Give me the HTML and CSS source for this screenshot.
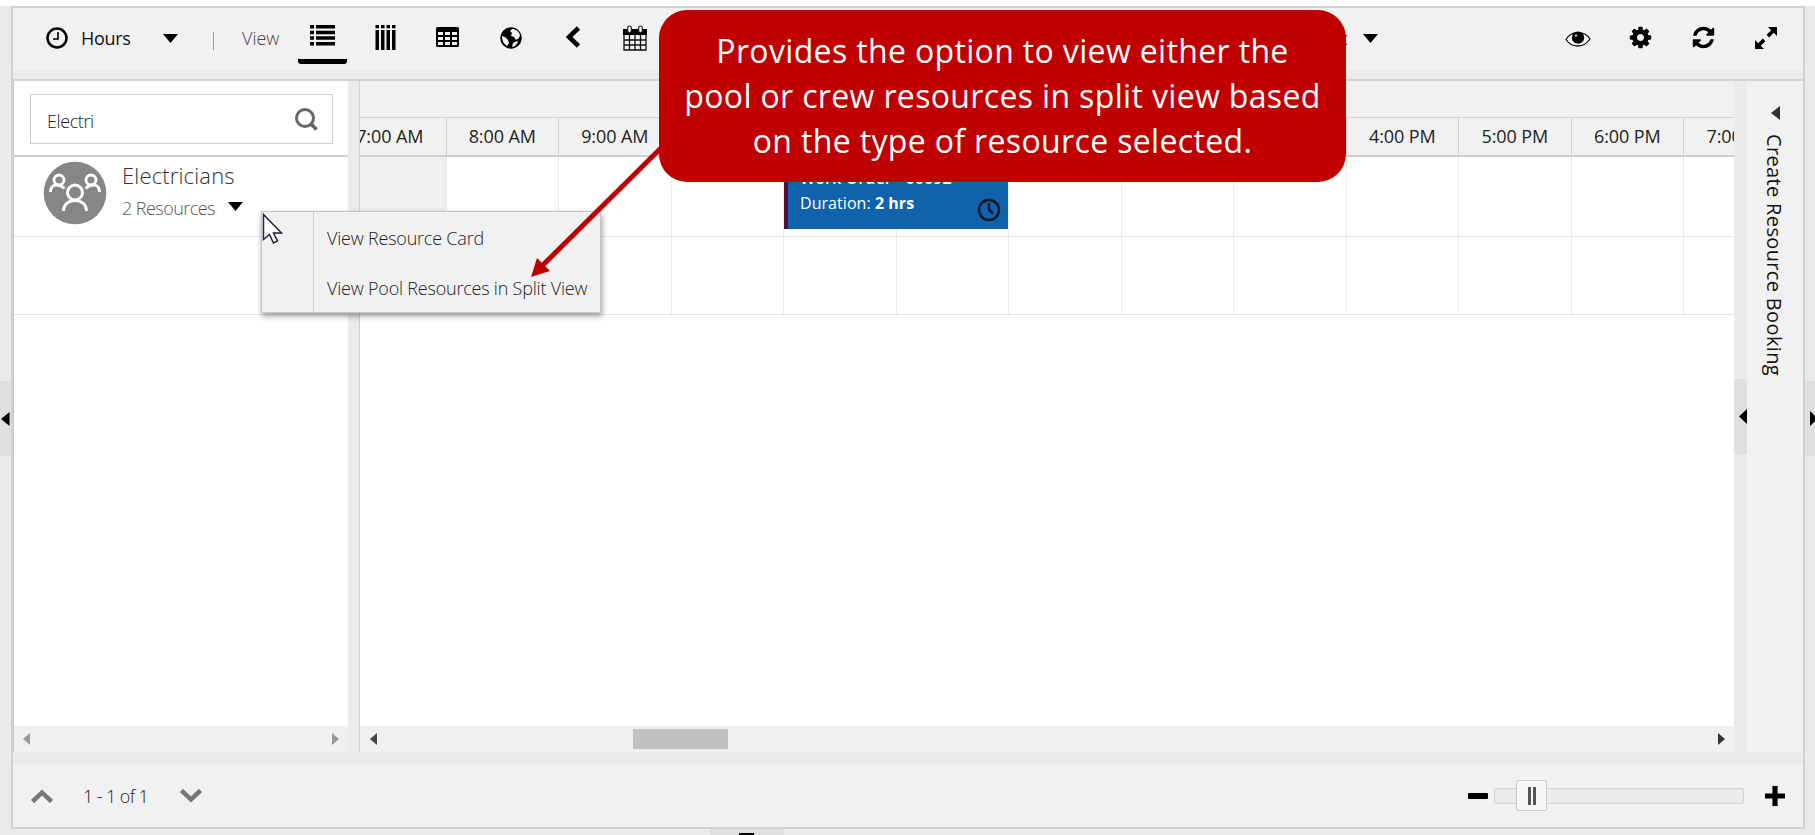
FILE: index.html
```html
<!DOCTYPE html>
<html lang="en">
<head>
<meta charset="utf-8">
<title>Schedule Board</title>
<link rel="stylesheet" href="styles.css">
</head>
<body>
<div class="page">
  <div class="rail rail-left"><div class="handle"><svg width="11" height="16" viewBox="0 0 11 16"><path d="M1 8 9.500 1v14z"/></svg></div></div>
  <main class="frame">
    <header class="toolbar">
      <svg class="i-clock" width="22" height="22" viewBox="0 0 22 22"><circle cx="11" cy="11" r="9.500" fill="none" stroke="#000" stroke-width="2.500"/><path d="M12 5v7H7" fill="none" stroke="#000" stroke-width="1.600"/></svg>
      <span class="t-hours">Hours</span>
      <svg class="i-caret1" width="15" height="9" viewBox="0 0 15 9"><path d="M0 0h15L7.500 9z"/></svg>
      <span class="bar"></span>
      <span class="t-view">View</span>
      <span class="tab"><svg width="25" height="21" viewBox="0 0 25 21"><path d="M0 0h4v3.500H0zM6 0h19v3.500H6zM0 5.700h4v3.500H0zM6 5.700h19v3.500H6zM0 11.300h4v3.500H0zM6 11.300h19v3.500H6zM0 17h4v3.500H0zM6 17h19v3.500H6z"/></svg></span>
      <svg class="i-cols" width="21" height="25" viewBox="0 0 21 25"><path d="M.5 0H4v3.300H.5zM6 0h3.500v3.300H6zM11.500 0H15v3.300h-3.500zM17 0h3.500v3.300H17zM.5 5H4v20H.5zM6 5h3.500v20H6zM11.500 5H15v20h-3.500zM17 5h3.500v20H17z"/></svg>
      <svg class="i-table" width="23" height="20" viewBox="0 0 23 20"><path fill-rule="evenodd" d="M1.500 0h20Q23 0 23 1.500v17q0 1.500-1.500 1.500h-20Q0 20 0 18.500v-17Q0 0 1.500 0zM2 5v3h5V5zM9 5v3h5V5zM16 5v3h5V5zM2 10v3h5v-3zM9 10v3h5v-3zM16 10v3h5v-3zM2 15v3h5v-3zM9 15v3h5v-3zM16 15v3h5v-3z"/></svg>
      <svg class="i-globe" width="22" height="22" viewBox="0 0 22 22"><circle cx="11" cy="11" r="10.700"/><path fill="#f1f1f1" d="M12 2c4 0 7 2.500 8 6l-1 3-3 2-2-3-3-1 1-3-2-2zM2 9l3 1 3 3 1 3-2 3C4 17 2 14 2 9zM13 16l4-2 1 1-3 4-3 1z"/></svg>
      <svg class="i-chev" width="15" height="22" viewBox="0 0 15 22"><path d="M12.500 2 3 11l9.500 9" fill="none" stroke="#000" stroke-width="4.600"/></svg>
      <svg class="i-cal" width="24" height="26" viewBox="0 0 24 26"><path d="M0 4h24v6H0z"/><path d="M1 9v16h22V9M6.500 10v15M12 10v15M17.500 10v15M1 15h22M1 20h22" fill="none" stroke="#111" stroke-width="1.300"/><rect x="4.700" y="1" width="3.600" height="6.500" rx="1.800" fill="#fff" stroke="#222" stroke-width="1.200"/><rect x="15.700" y="1" width="3.600" height="6.500" rx="1.800" fill="#fff" stroke="#222" stroke-width="1.200"/></svg>
      <span class="t-t">t</span>
      <svg class="i-caret2" width="15" height="9" viewBox="0 0 15 9"><path d="M0 0h15L7.500 9z"/></svg>
      <svg class="i-eye" width="26" height="18" viewBox="0 0 26 18"><path d="M1 9.500C6 1 19 0 25 9 19 18 7 18.500 1 9.500z" fill="#f7f7f7" stroke="#111" stroke-width="1.300"/><circle cx="13" cy="7.600" r="6.200"/><circle cx="11" cy="5.500" r="1.300" fill="#aaa"/></svg>
      <svg class="i-cog" width="25" height="25" viewBox="0 0 1792 1792"><path d="M1152 896q0-106-75-181t-181-75-181 75-75 181 75 181 181 75 181-75 75-181zm512-109v222q0 12-8 23t-20 13l-185 28q-19 54-39 91 35 50 107 138 10 12 10 25t-9 23q-27 37-99 108t-94 71q-12 0-26-9l-138-108q-44 23-91 38-16 136-29 186-7 28-36 28h-222q-14 0-24.500-8.500t-11.500-21.500l-28-184q-49-16-90-37l-141 107q-10 9-25 9-14 0-25-11-126-114-165-168-7-10-7-23 0-12 8-23 15-21 51-66.500t54-70.500q-27-50-41-99l-183-27q-13-2-21-12.500t-8-23.500v-222q0-12 8-23t19-13l186-28q14-46 39-92-40-57-107-138-10-12-10-24 0-10 9-23 26-36 98.500-107.500t94.500-71.500q13 0 26 10l138 107q44-23 91-38 16-136 29-186 7-28 36-28h222q14 0 24.500 8.500t11.500 21.500l28 184q49 16 90 37l142-107q9-9 24-9 13 0 25 10 129 119 165 170 7 8 7 22 0 12-8 23-15 21-51 66.500t-54 70.500q26 50 41 98l183 28q13 2 21 12.500t8 23.500z"/></svg>
      <svg class="i-refresh" width="25" height="25" viewBox="0 0 1792 1792"><path d="M1639 1056q0 5-1 7-64 268-268 434.500t-478 166.500q-146 0-282.500-55t-243.500-157l-129 129q-19 19-45 19t-45-19-19-45v-448q0-26 19-45t45-19h448q26 0 45 19t19 45-19 45l-137 137q71 66 161 102t187 36q134 0 250-65t186-179q11-17 53-117 8-23 30-23h192q13 0 22.500 9.500t9.500 22.500zm25-800v448q0 26-19 45t-45 19h-448q-26 0-45-19t-19-45 19-45l138-138q-148-137-349-137-134 0-250 65t-186 179q-11 17-53 117-8 23-30 23h-199q-13 0-22.500-9.500t-9.500-22.500v-7q65-268 270-434.500t480-166.500q146 0 284 55.500t245 156.500l130-129q19-19 45-19t45 19 19 45z"/></svg>
      <svg class="i-expand" width="22" height="22" viewBox="0 0 22 22"><path d="M13 0h9v9l-3.200-3.200-4.600 4.600-2.600-2.600 4.600-4.600zM0 13l3.200 3.200 4.600-4.600 2.600 2.600-4.600 4.600L9 22H0z"/></svg>
    </header>
    <div class="body">
      <section class="resources">
        <div class="search-wrap"><div class="search"><span>Electri</span><svg width="25" height="25" viewBox="0 0 25 25" fill="none" stroke="#666" stroke-width="3"><circle cx="11" cy="11" r="8.500"/><path d="m16.500 16.500 6 6" stroke-width="3.500"/></svg></div></div>
        <div class="res-row">
          <svg class="avatar" width="64" height="64" viewBox="0 0 64 64"><circle cx="32" cy="32" r="31.300" fill="#868686"/><g fill="none" stroke="#fff" stroke-width="2.800"><circle cx="16" cy="19" r="5"/><circle cx="48" cy="19" r="5"/><path d="M7.500 31c0-8 8-9 14-3.500M56.500 31c0-8-8-9-14-3.500"/><circle cx="32" cy="31.500" r="7.500" stroke-width="3"/><path d="M20.500 50c0-14 23-14 23 0" stroke-width="3"/></g></svg>
          <div class="res-text"><div class="res-name">Electricians</div><div class="res-count"><span>2 Resources</span><svg width="15" height="9" viewBox="0 0 15 9"><path d="M0 0h15L7.500 9z"/></svg></div></div>
        </div>
        <div class="res-row2"></div>
        <div class="hscroll"><svg width="7" height="12" viewBox="0 0 7 12"><path d="M0 6 7 0v12z" fill="#999"/></svg><svg width="7" height="12" viewBox="0 0 7 12"><path d="M7 6 0 0v12z" fill="#999"/></svg></div>
      </section>
      <section class="timeline">
        <div class="day"></div>
        <div class="hours"><span>7:00 AM</span><span>8:00 AM</span><span>9:00 AM</span><span>10:00 AM</span><span>11:00 AM</span><span>12:00 PM</span><span>1:00 PM</span><span>2:00 PM</span><span>3:00 PM</span><span>4:00 PM</span><span>5:00 PM</span><span>6:00 PM</span><span>7:00 PM</span></div>
        <div class="slots first"><i class="off"></i><i></i><i></i><i></i><i></i><i></i><i></i><i></i><i></i><i></i><i></i><i></i><i></i></div>
        <div class="slots"><i></i><i></i><i></i><i></i><i></i><i></i><i></i><i></i><i></i><i></i><i></i><i></i><i></i></div>
        <div class="hscroll tscroll"><svg width="7" height="12" viewBox="0 0 7 12"><path d="M0 6 7 0v12z" fill="#444"/></svg><b></b><svg width="7" height="12" viewBox="0 0 7 12"><path d="M7 6 0 0v12z" fill="#333"/></svg></div>
      </section>
      <div class="rail rail-mid"><div class="handle"><svg width="8" height="15" viewBox="0 0 8 15"><path d="M0 7.500 8 0v15z"/></svg></div></div>
      <aside class="side"><svg width="9" height="14" viewBox="0 0 9 14"><path d="M0 7 9 0v14z" fill="#333"/></svg><span>Create Resource Booking</span></aside>
    </div>
    <footer class="footer">
      <svg width="22" height="14" viewBox="0 0 22 14"><path d="m1.500 12.500 9.500-9 9.500 9" fill="none" stroke="#777" stroke-width="4.500"/></svg>
      <span class="pages">1 - 1 of 1</span>
      <svg width="22" height="14" viewBox="0 0 22 14"><path d="m1.500 1.500 9.500 9 9.500-9" fill="none" stroke="#777" stroke-width="4.500"/></svg>
      <span class="minus"></span>
      <div class="track"><div class="knob"></div></div>
      <svg class="plus" width="20" height="20" viewBox="0 0 20 20"><path d="M10 0v20M0 10h20" stroke="#000" stroke-width="5.200"/></svg>
    </footer>
  </main>
  <div class="rail rail-right"><div class="handle"><svg width="10" height="15" viewBox="0 0 10 15"><path d="M5 0v15l8-7.500z"/></svg></div></div>
  <div class="bottom-tab"><i></i></div>

  <div class="booking"><div class="wo">Work Order - 00092</div><div class="dur">Duration: <b>2 hrs</b></div><svg width="24" height="24" viewBox="0 0 24 24" fill="none" stroke="#0a1420" stroke-width="2.400"><circle cx="12" cy="12" r="10"/><path d="M12 5v7l4 3.500"/></svg></div>
  <div class="menu"><div class="gutter"></div><div class="items"><span class="m1">View Resource Card</span><span class="m2">View Pool Resources in Split View</span></div></div>
  <svg class="cursor" width="22" height="32" viewBox="0 0 22 32"><path d="M1.500 1.500v25l6-5 4 8.500 4-2-4-8h8z" fill="#fff" stroke="#223" stroke-width="1.500"/></svg>
  <svg class="arrow" width="140" height="140" viewBox="0 0 140 140"><path d="M136 8 16 127" stroke="#c00000" stroke-width="5"/><path d="M6 137 12 118 25 131z" fill="#c00000"/></svg>
  <div class="callout"><span class="c1">Provides the option to view either the</span><span class="c2">pool or crew resources in split view based</span><span class="c3">on the type of resource selected.</span></div>
</div>
</body>
</html>
```
FILE: styles.css
```css
* { box-sizing: border-box; }
body { margin: 0; background: #fff; font-family: "Open Sans", "Noto Sans", sans-serif; font-size: 18px; color: #222; }
svg { display: block; flex: none; }
.page { position: relative; width: 1815px; height: 835px; padding-top: 6px; display: flex; overflow: hidden; }
.rail { background: #ebebeb; flex: none; }
.rail-left { width: 11px; padding-top: 375px; }
.rail-right { width: 10px; padding-top: 375px; }
.rail-mid { width: 13px; padding-top: 298px; }
.handle { height: 75px; background: #dfdfdf; display: flex; align-items: center; }
.rail-mid .handle { justify-content: flex-end; }
.frame { width: 1794px; height: 823px; border: 2px solid #d2d2d2; background: #ebebeb; display: flex; flex-direction: column; box-shadow: 0 6px 0 #ebebeb; }
.toolbar { height: 62px; background: #f1f1f1; display: flex; align-items: flex-start; flex: none; white-space: nowrap; }
.i-clock { margin: 19px 0 0 33px; }
.t-hours { width: 60px; margin: 17px 0 0 13px; line-height: 26px; letter-spacing: -0.300px; color: #111; }
.i-caret1 { margin: 26px 0 0 22px; }
.bar { width: 1px; height: 18px; background: #999; margin: 24px 0 0 35px; }
.t-view { width: 45px; margin: 17px 0 0 28px; line-height: 26px; font-weight: 300; color: #444; }
.tab { width: 49px; height: 56px; margin-left: 11px; padding: 17px 0 0 12px; background: linear-gradient(#000, #000) bottom / 49px 5px no-repeat; border-radius: 3px; }
.i-cols { margin: 17px 0 0 28px; }
.i-table { margin: 19px 0 0 40px; }
.i-globe { margin: 19px 0 0 41px; }
.i-chev { margin: 18px 0 0 44px; }
.i-cal { margin: 17px 0 0 42px; }
.t-t { width: 10px; margin: 17px 0 0 694px; line-height: 26px; }
.i-caret2 { margin: 26px 0 0 12px; }
.i-eye { margin: 22px 0 0 187px; }
.i-cog { margin: 17px 0 0 37px; }
.i-refresh { margin: 17px 0 0 38px; }
.i-expand { margin: 19px 0 0 39px; }
.body { height: 673px; margin-top: 9px; border-top: 2px solid #d2d2d2; display: flex; flex: none; }
.resources { width: 335px; background: #fff; border-left: 1px solid #c8c8c8; display: flex; flex-direction: column; }
.search-wrap { height: 76px; padding: 13px 15px 0 16px; border-bottom: 2px solid #cfcfcf; }
.search { height: 50px; border: 1.500px solid #ccc; display: flex; justify-content: space-between; align-items: center; padding: 4px 13px 0 16px; font-weight: 300; letter-spacing: -0.400px; }
.search svg { margin-top: -4px; }
.res-row { height: 80px; border-bottom: 1px solid #e4e4e4; display: flex; padding: 4px 0 0 29px; }
.res-text { margin-left: 15px; }
.res-name { font-size: 22px; line-height: 28px; padding-bottom: 2px; color: #333; letter-spacing: 0.150px; font-weight: 300; }
.res-count { display: flex; align-items: center; gap: 13px; line-height: 34px; font-weight: 300; color: #555; letter-spacing: -0.550px; }
.res-count svg { margin-top: -3px; }
.res-row2 { height: 78px; border-bottom: 1px solid #e4e4e4; }
.hscroll { height: 26px; margin-top: auto; background: #f0f0f0; display: flex; align-items: center; justify-content: space-between; padding: 0 9px; }
.timeline { width: 1375px; margin-left: 11px; border-left: 1px solid #d2d2d2; background: #fff; display: flex; flex-direction: column; overflow: hidden; }
.day { height: 36px; background: #f1f1f1; flex: none; }
.hours { height: 40px; margin-left: -26px; flex: none; display: flex; border-top: 1.500px solid #d2d2d2; border-bottom: 2px solid #cfcfcf; background: #f1f1f1; line-height: 36px; font-size: 18px; }
.hours span { width: 112.500px; flex: none; text-align: center; border-right: 1px solid #d0d0d0; letter-spacing: -0.100px; }
.slots { height: 78px; margin-left: -26px; flex: none; display: flex; border-bottom: 1px solid #e7e7e7; }
.slots.first { height: 80px; }
.slots i { width: 112.500px; flex: none; border-right: 1px solid #ebebeb; }
.slots .off { background: #efefef; }
.tscroll { padding-left: 10px; }
.tscroll b { width: 95px; height: 20px; background: #c1c1c1; margin-right: 734px; }
.side { width: 56px; background: #f1f1f1; padding: 25px 0 0 14px; }
.side svg { margin-left: 10px; }
.side span { display: block; writing-mode: vertical-rl; margin-top: 14px; font-size: 20px; line-height: 26px; letter-spacing: 0.350px; color: #111; white-space: nowrap; }
.footer { height: 63px; margin-top: 12px; background: #f1f1f1; display: flex; align-items: center; padding-left: 18px; flex: none; }
.pages { width: 66px; margin: 0 31px 0 30px; font-size: 18px; font-weight: 300; white-space: nowrap; letter-spacing: -0.600px; }
.minus { width: 20px; height: 6px; border-radius: 1px; background: #000; margin-left: 1266px; }
.track { width: 250px; height: 16px; margin-left: 6px; border: 1.500px solid #d2d2d2; border-radius: 2px; background: #ebebeb; display: flex; align-items: center; }
.knob { width: 31px; height: 31px; margin-left: 21px; flex: none; border: 1.500px solid #ccc; border-radius: 2px; background: linear-gradient(90deg, #555 0 3px, transparent 3px 5px, #555 5px 8px) center / 8px 18px no-repeat #f6f6f6; }
.plus { margin-left: 21px; }
.bottom-tab { position: absolute; left: 710px; top: 829px; width: 74px; height: 6px; background: #dfdfdf; padding: 4px 30px 0 29px; }
.bottom-tab i { display: block; height: 2px; background: #000; }
.booking { position: absolute; left: 784px; top: 160px; width: 224px; height: 69px; background: #0f62ac; border-left: 4px solid #5a0a3c; color: #fff; font-size: 16px; padding: 6px 0 0 12px; white-space: nowrap; }
.wo { font-weight: 600; line-height: 25px; letter-spacing: 0.100px; }
.dur { line-height: 25px; letter-spacing: 0.050px; }
.booking svg { position: absolute; right: 7px; top: 38px; }
.menu { position: absolute; left: 261px; top: 211px; width: 340px; height: 102px; background: #f1f1f1; border: 1px solid #c6c6c6; box-shadow: 1px 3px 6px rgba(0,0,0,.4); display: flex; font-weight: 300; }
.gutter { width: 52px; border-right: 1px solid #ccc; }
.items { padding: 1px 0 0 13px; display: flex; flex-direction: column; line-height: 50px; white-space: nowrap; letter-spacing: -0.210px; }
.items span { width: max-content; }
.cursor { position: absolute; left: 262px; top: 213px; }
.arrow { position: absolute; left: 525px; top: 140px; }
.callout { position: absolute; left: 659px; top: 10px; width: 687px; height: 172px; border-radius: 28px; background: #c00000; color: #fff; font-family: "Open Sans", sans-serif; font-size: 32px; letter-spacing: 0.350px; line-height: 45px; display: flex; flex-direction: column; align-items: center; padding-top: 18px; white-space: nowrap; }
```
